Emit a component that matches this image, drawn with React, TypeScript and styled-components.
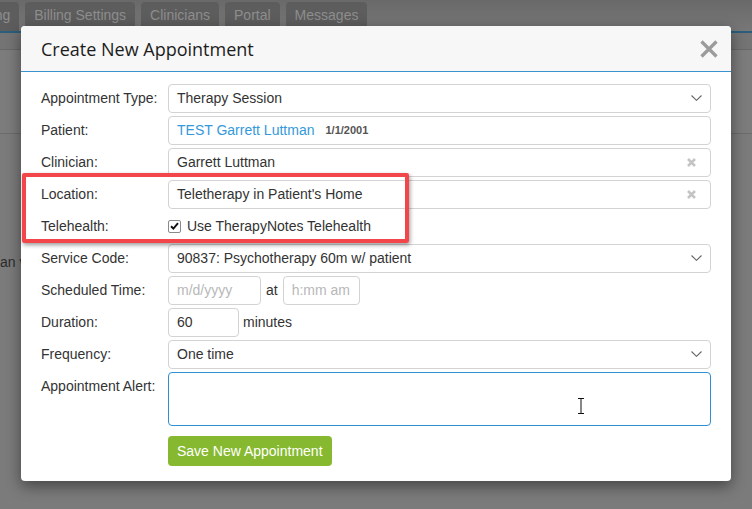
import React from 'react'
import styled, { createGlobalStyle } from 'styled-components'

const GlobalStyle = createGlobalStyle`
  html, body {
    margin: 0;
    padding: 0;
  }
  body {
    font-family: "Liberation Sans", Arial, sans-serif;
    background: #7b7b7b;
    overflow: hidden;
  }
`

const Screen = styled.div`
  position: relative;
  width: 752px;
  height: 509px;
  overflow: hidden;
  background: #7b7b7b;
`

/* dimmed application behind the dialog */
const TopStrip = styled.div`
  height: 31px;
  padding-top: 2px;
  box-sizing: border-box;
  background: linear-gradient(#696969, #787878);
`

const TabBar = styled.ul`
  list-style: none;
  display: flex;
  gap: 6px;
  margin: 0 0 0 -68px;
  padding: 0;
  height: 29px;
`

const Tab = styled.li`
  display: flex;
  align-items: center;
  padding: 0 9px 3px;
  height: 29px;
  box-sizing: border-box;
  border-radius: 4px 4px 0 0;
  background: #5d5d5d;
  color: #8e8e8e;
  font-size: 14px;
  white-space: nowrap;
`

const BlueRule = styled.div`
  height: 2px;
  background: #2b5d7c;
`

const SubBar = styled.div`
  height: 16px;
  background: #747474;
  border-bottom: 1px solid #686868;
`

const Panel = styled.div`
  height: 83px;
  background: #7c7c7c;
  border-bottom: 1px solid #6c6c6c;
`

const PageText = styled.p`
  margin: 120px 0 0 -7px;
  font-size: 14px;
  line-height: 16px;
  color: #2c2c2c;
  white-space: nowrap;
`

/* dialog */
const Modal = styled.div`
  position: absolute;
  left: 21px;
  top: 26px;
  width: 710px;
  background: #fff;
  border-radius: 4px;
  box-shadow: 0 5px 15px rgba(0, 0, 0, 0.45);
`

const ModalHeader = styled.div`
  display: flex;
  align-items: center;
  justify-content: space-between;
  height: 45px;
  padding: 0 12px 0 20px;
  background: #f7f7f7;
  border-bottom: 1px solid #3a93cd;
  border-radius: 4px 4px 0 0;
`

const Title = styled.h4`
  margin: 0;
  font-family: "Open Sans", "Liberation Sans", sans-serif;
  font-size: 18px;
  font-weight: 400;
  color: #1c1c1c;
`

const CloseButton = styled.button`
  display: flex;
  padding: 0;
  margin-top: 1px;
  border: 0;
  background: none;
`

const ModalBody = styled.div`
  position: relative;
  padding: 12px 20px 15px;
`

const Row = styled.div`
  display: grid;
  grid-template-columns: 127px 1fr;
  min-height: 29px;
  margin-bottom: 3px;
`

const Label = styled.label`
  font-size: 14px;
  line-height: 28px;
  color: #333;
  white-space: nowrap;
`

const FieldBox = styled.div<{ $width?: number }>`
  display: flex;
  align-items: center;
  height: 29px;
  box-sizing: border-box;
  width: ${p => (p.$width ? `${p.$width}px` : '100%')};
  padding: 0 8px 1px;
  border: 1px solid #d3d3d3;
  border-radius: 4px;
  background: #fff;
  font-size: 14px;
  color: #333;
  white-space: nowrap;
`

const Value = styled.span`
  flex: 1;
`

const Placeholder = styled.span`
  color: #b8b8b8;
`

const PatientName = styled.span`
  color: #3499da;
`

const PatientDob = styled.span`
  margin-left: 11px;
  font-size: 11px;
  font-weight: bold;
  color: #555;
`

const Inline = styled.div`
  display: flex;
  align-items: center;
  font-size: 14px;
  color: #333;
`

const Joiner = styled.span<{ $gap: number }>`
  margin: 0 ${p => p.$gap}px 1px;
`

const CheckLine = styled.label`
  display: flex;
  align-items: center;
  gap: 6px;
  padding-bottom: 1px;
  font-size: 14px;
  color: #333;
`

const CheckBox = styled.span`
  display: flex;
  align-items: center;
  justify-content: center;
  width: 13px;
  height: 13px;
  box-sizing: border-box;
  border: 1px solid #8a8a8a;
  border-radius: 2px;
  background: #fff;
`

const AlertWrap = styled.div`
  position: relative;
  height: 54px;
`

const AlertArea = styled.textarea`
  display: block;
  width: 100%;
  height: 54px;
  box-sizing: border-box;
  border: 1px solid #2f90d1;
  border-radius: 4px;
  resize: none;
  outline: none;
`

const TextCursor = styled.svg`
  position: absolute;
  left: 409px;
  top: 26px;
`

const Actions = styled.div`
  padding: 7px 0 0 127px;
`

const SaveButton = styled.button`
  height: 30px;
  padding: 0 9px 1px;
  border: 0;
  border-radius: 4px;
  background: #86b92f;
  color: #fff;
  font-family: "Liberation Sans", Arial, sans-serif;
  font-size: 14px;
`

const Highlight = styled.div`
  position: absolute;
  left: 1px;
  top: 101px;
  width: 387px;
  height: 70px;
  box-sizing: border-box;
  border: 4px solid #f2464a;
  border-radius: 2px;
  box-shadow: 1px 2px 4px rgba(0, 0, 0, 0.4);
  pointer-events: none;
`

const Chevron = () => (
  <svg width="11" height="6" viewBox="0 0 11 6">
    <path d="M0.5 0.5L5.5 5.3L10.5 0.5" fill="none" stroke="#666" strokeWidth="1.1" />
  </svg>
)

const Clear = () => (
  <svg width="9" height="9" viewBox="0 0 9 9" style={{ marginRight: 6 }}>
    <path d="M1 1L8 8M8 1L1 8" fill="none" stroke="#c4c4c4" strokeWidth="2.6" />
  </svg>
)

const tabs = ['Scheduling', 'Billing Settings', 'Clinicians', 'Portal', 'Messages']

const App: React.FunctionComponent = () => (
  <Screen>
    <GlobalStyle />
    <TopStrip>
      <TabBar>
        {tabs.map(t => (
          <Tab key={t}>{t}</Tab>
        ))}
      </TabBar>
    </TopStrip>
    <BlueRule />
    <SubBar />
    <Panel />
    <PageText>can view</PageText>

    <Modal>
      <ModalHeader>
        <Title>Create New Appointment</Title>
        <CloseButton aria-label="Close">
          <svg width="20" height="18" viewBox="0 0 20 18">
            <path d="M2.5 1.5L17.5 16.5M17.5 1.5L2.5 16.5" stroke="#9b9b9b" strokeWidth="3.2" />
          </svg>
        </CloseButton>
      </ModalHeader>

      <ModalBody>
        <Row>
          <Label>Appointment Type:</Label>
          <FieldBox>
            <Value>Therapy Session</Value>
            <Chevron />
          </FieldBox>
        </Row>
        <Row>
          <Label>Patient:</Label>
          <FieldBox>
            <PatientName>TEST Garrett Luttman</PatientName>
            <PatientDob>1/1/2001</PatientDob>
          </FieldBox>
        </Row>
        <Row>
          <Label>Clinician:</Label>
          <FieldBox>
            <Value>Garrett Luttman</Value>
            <Clear />
          </FieldBox>
        </Row>
        <Row>
          <Label>Location:</Label>
          <FieldBox>
            <Value>Teletherapy in Patient's Home</Value>
            <Clear />
          </FieldBox>
        </Row>
        <Row>
          <Label>Telehealth:</Label>
          <CheckLine>
            <CheckBox>
              <svg width="9" height="8" viewBox="0 0 9 8">
                <path d="M1 4.2L3.4 6.5L8 1.2" fill="none" stroke="#111" strokeWidth="1.9" />
              </svg>
            </CheckBox>
            Use TherapyNotes Telehealth
          </CheckLine>
        </Row>
        <Row>
          <Label>Service Code:</Label>
          <FieldBox>
            <Value>90837: Psychotherapy 60m w/ patient</Value>
            <Chevron />
          </FieldBox>
        </Row>
        <Row>
          <Label>Scheduled Time:</Label>
          <Inline>
            <FieldBox $width={93}>
              <Placeholder>m/d/yyyy</Placeholder>
            </FieldBox>
            <Joiner $gap={5}>at</Joiner>
            <FieldBox $width={77}>
              <Placeholder>h:mm am</Placeholder>
            </FieldBox>
          </Inline>
        </Row>
        <Row>
          <Label>Duration:</Label>
          <Inline>
            <FieldBox $width={71}>60</FieldBox>
            <Joiner $gap={4}>minutes</Joiner>
          </Inline>
        </Row>
        <Row>
          <Label>Frequency:</Label>
          <FieldBox>
            <Value>One time</Value>
            <Chevron />
          </FieldBox>
        </Row>
        <Row>
          <Label>Appointment Alert:</Label>
          <AlertWrap>
            <AlertArea />
            <TextCursor width="8" height="16" viewBox="0 0 8 16">
              <path d="M1 0.5H7M4 0.5V15.5M1 15.5H7" fill="none" stroke="#111" strokeWidth="1" />
            </TextCursor>
          </AlertWrap>
        </Row>
        <Actions>
          <SaveButton>Save New Appointment</SaveButton>
        </Actions>

        <Highlight />
      </ModalBody>
    </Modal>
  </Screen>
)

export default App
